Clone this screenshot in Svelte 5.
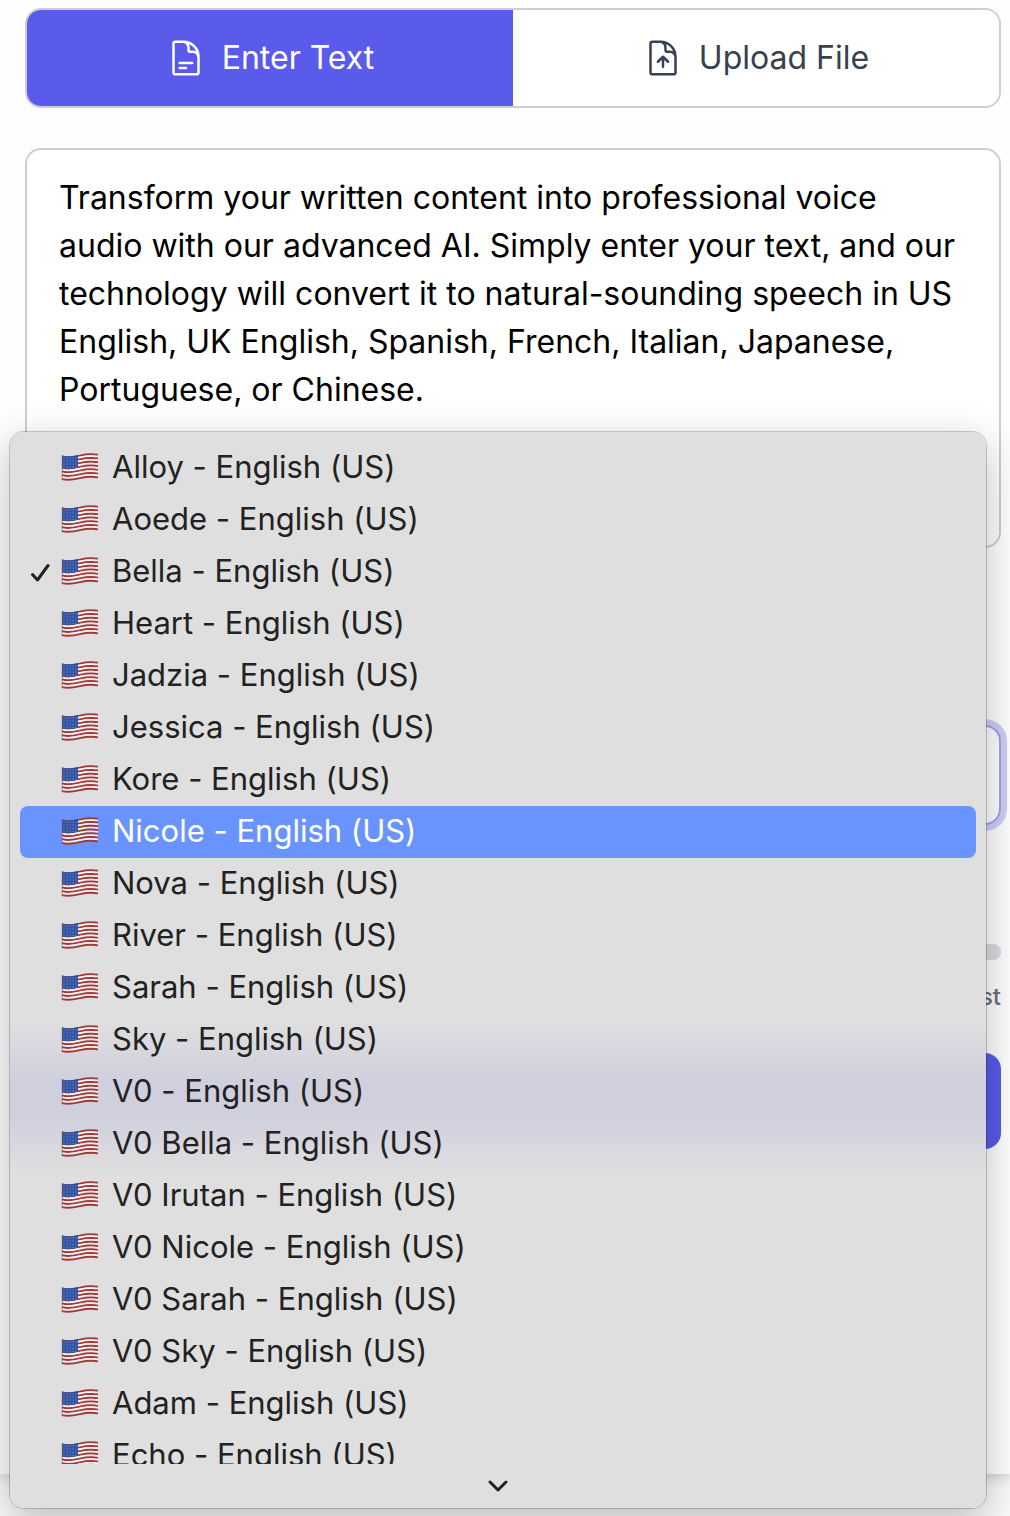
<script lang="ts">
	type Voice = { id: string; name: string };

	const voices: Voice[] = [
		'Alloy',
		'Aoede',
		'Bella',
		'Heart',
		'Jadzia',
		'Jessica',
		'Kore',
		'Nicole',
		'Nova',
		'River',
		'Sarah',
		'Sky',
		'V0',
		'V0 Bella',
		'V0 Irutan',
		'V0 Nicole',
		'V0 Sarah',
		'V0 Sky',
		'Adam',
		'Echo'
	].map((name) => ({ id: name.toLowerCase().replace(' ', '-'), name }));

	const stripes = Array.from({ length: 13 }, (_, i) => i);
	const stars = Array.from({ length: 20 }, (_, i) => ({
		x: 3 + (i % 5) * 3,
		y: 5 + Math.floor(i / 5) * 3
	}));

	let mode = $state<'text' | 'file'>('text');
	let selected = $state('bella');
	let active = $state('nicole');
	let speed = $state(1);
	let text = $state(
		'Transform your written content into professional voice audio with our advanced AI. Simply enter your text, and our technology will convert it to natural-sounding speech in US English, UK English, Spanish, French, Italian, Japanese, Portuguese, or Chinese.'
	);
</script>

{#snippet flag()}
	<svg class="flag" viewBox="0 0 38 28" aria-hidden="true">
		{#each stripes as i (i)}
			<path
				d="M1 3.500C7 5.300 13 4 19 2.600S31 0.800 37 1.800"
				transform="translate(0 {i * 1.88})"
				fill="none"
				stroke={i % 2 ? '#f3eeee' : '#a03a38'}
				stroke-width="1.95"
			/>
		{/each}
		<path d="M1 2.500C6 4 11 3.600 17 2.100V14.500C11 16.300 6 16.800 1 15Z" fill="#31539f" />
		{#each stars as star, i (i)}
			<circle cx={star.x} cy={star.y} r="0.6" fill="#93a9d8" />
		{/each}
		<path d="M1.200 2.500V27" stroke="#6b4f5f" stroke-width="0.5" />
	</svg>
{/snippet}

<main class="page">
	<form class="card" onsubmit={(e) => e.preventDefault()}>
		<div class="tabs">
			<button
				type="button"
				class="tab"
				class:tab--active={mode === 'text'}
				aria-pressed={mode === 'text'}
				onclick={() => (mode = 'text')}
			>
				<svg class="tab__icon" viewBox="0 0 24 24" aria-hidden="true">
					<path
						d="M19.5 14.25v-2.625a3.375 3.375 0 0 0-3.375-3.375h-1.5A1.125 1.125 0 0 1 13.5 7.125v-1.5a3.375 3.375 0 0 0-3.375-3.375H8.25m0 12.75h7.5m-7.5 3H12M10.5 2.25H5.625c-.621 0-1.125.504-1.125 1.125v17.25c0 .621.504 1.125 1.125 1.125h12.750c.621 0 1.125-.504 1.125-1.125V11.25a9 9 0 0 0-9-9Z"
					/>
				</svg>
				Enter Text
			</button>
			<button
				type="button"
				class="tab"
				class:tab--active={mode === 'file'}
				aria-pressed={mode === 'file'}
				onclick={() => (mode = 'file')}
			>
				<svg class="tab__icon" viewBox="0 0 24 24" aria-hidden="true">
					<path
						d="M19.5 14.25v-2.625a3.375 3.375 0 0 0-3.375-3.375h-1.5A1.125 1.125 0 0 1 13.5 7.125v-1.5a3.375 3.375 0 0 0-3.375-3.375H8.25m6.75 12-3-3m0 0-3 3m3-3v6m-1.5-15H5.625c-.621 0-1.125.504-1.125 1.125v17.25c0 .621.504 1.125 1.125 1.125h12.750c.621 0 1.125-.504 1.125-1.125V11.25a9 9 0 0 0-9-9Z"
					/>
				</svg>
				Upload File
			</button>
		</div>

		<textarea class="text" aria-label="Text" spellcheck="false" bind:value={text}></textarea>

		<div class="voice">
			<label class="label" for="voice">Voice</label>
			<div class="voice__control">
				<select id="voice" class="select" bind:value={selected}>
					{#each voices as voice (voice.id)}
						<option value={voice.id}>{voice.name} - English (US)</option>
					{/each}
				</select>

				<div class="menu">
					<ul class="menu__list" role="listbox" aria-label="Voice">
						{#each voices as voice (voice.id)}
							<li role="option" aria-selected={voice.id === selected}>
								<button
									type="button"
									class="item"
									class:item--active={voice.id === active}
									onmouseenter={() => (active = voice.id)}
									onclick={() => (selected = voice.id)}
								>
									<svg class="item__check" viewBox="0 0 20 20" aria-hidden="true">
										{#if voice.id === selected}
											<path d="M2.500 12.500 7.500 18 18 3.500" />
										{/if}
									</svg>
									{@render flag()}
									<span class="item__name">{voice.name} - English (US)</span>
								</button>
							</li>
						{/each}
					</ul>
					<div class="menu__more">
						<svg class="menu__chevron" viewBox="0 0 20 12" aria-hidden="true">
							<path d="M2 2 10 10 18 2" />
						</svg>
					</div>
				</div>
			</div>
		</div>

		<div class="speed">
			<label class="label" for="speed">Speed</label>
			<input id="speed" class="range" type="range" min="0.5" max="1.5" step="0.1" bind:value={speed} />
			<div class="scale"><span>Slow</span><span>Fast</span></div>
		</div>

		<button type="submit" class="submit">Generate</button>
	</form>
</main>

<style>
	:global(body) {
		background: #f9fafb;
		overflow: hidden;
	}
	.page {
		min-height: 100vh;
		box-sizing: border-box;
		overflow: hidden;
		font-family: Inter, 'Liberation Sans', sans-serif;
		font-size: 32px;
		line-height: 48px;
	}
	.page * {
		box-sizing: border-box;
	}
	.card {
		display: flex;
		flex-direction: column;
		padding: 8px 9px 325px 25px;
		background: #fefefe;
		box-shadow: 0 4px 12px rgba(0, 0, 0, 0.16);
	}
	button,
	select,
	textarea {
		font: inherit;
	}
	button {
		border: 0;
		cursor: pointer;
	}

	.tabs {
		display: flex;
		border: 2px solid #cccdd6;
		border-radius: 16px;
		overflow: hidden;
	}
	.tab {
		flex: 1;
		display: flex;
		align-items: center;
		justify-content: center;
		gap: 16px;
		padding: 24px;
		background: #fff;
		color: #374151;
	}
	.tab--active {
		background: #5a5aeb;
		color: #fff;
	}
	.tab__icon {
		width: 40px;
		height: 40px;
		fill: none;
		stroke: currentColor;
		stroke-width: 1.5;
		stroke-linecap: round;
		stroke-linejoin: round;
	}

	.text {
		display: block;
		width: 100%;
		height: 400px;
		margin-top: 40px;
		padding: 24px 32px;
		border: 2px solid #cccdd3;
		border-radius: 16px;
		background: #fff;
		color: #000;
		resize: none;
		outline: none;
	}
	.label {
		display: block;
		margin-bottom: 16px;
		font-size: 28px;
		line-height: 40px;
		color: #374151;
	}

	.voice {
		margin-top: 121px;
	}
	.voice__control {
		position: relative;
	}
	.select {
		display: block;
		width: 100%;
		height: 100px;
		padding: 0 32px;
		appearance: none;
		border: 2px solid #a3a1ea;
		border-radius: 16px;
		background: #fff;
		box-shadow: 0 0 0 6px #cecdf6;
		outline: none;
	}

	/* Das Menü liegt wie ein natives Popup über dem Formular. */
	.menu {
		position: absolute;
		z-index: 1;
		top: -293px;
		left: -15px;
		right: 15px;
		padding: 10px 10px 0;
		border-radius: 14px;
		background: linear-gradient(
			#dfdfdf 590px,
			#d0cfde 650px,
			#d0cfde 685px,
			#dfdfdf 740px
		);
		box-shadow:
			0 0 0 1px rgba(0, 0, 0, 0.2),
			0 12px 40px rgba(0, 0, 0, 0.26);
	}
	.menu__list {
		height: 1022px;
		margin: 0;
		padding: 0;
		overflow: hidden;
		list-style: none;
	}
	.item {
		display: flex;
		align-items: center;
		width: 100%;
		height: 52px;
		padding: 0 10px 2px;
		border-radius: 8px;
		background: none;
		color: #222;
		font-size: 31px;
		/* Bindestrich und Klammern in Grundhöhe, ohne kontextuelle Varianten. */
		font-feature-settings: 'calt' 0;
		text-align: left;
	}
	.item--active {
		background: #6a94fd;
		color: #fff;
	}
	.item__check {
		width: 20px;
		height: 20px;
		margin-top: 2px;
		margin-right: 11px;
		fill: none;
		stroke: #222;
		stroke-width: 3;
		stroke-linecap: round;
		stroke-linejoin: round;
	}
	.flag {
		width: 38px;
		height: 28px;
		margin-right: 13px;
	}
	.menu__more {
		display: flex;
		align-items: center;
		justify-content: center;
		height: 44px;
	}
	.menu__chevron {
		width: 20px;
		height: 12px;
		fill: none;
		stroke: #222;
		stroke-width: 3;
		stroke-linecap: round;
		stroke-linejoin: round;
	}

	.speed {
		margin-top: 63px;
	}
	.range {
		display: block;
		width: 100%;
		height: 16px;
		margin: 0;
		appearance: none;
		border-radius: 8px;
		background: #d9dbe2;
	}
	.scale {
		display: flex;
		justify-content: space-between;
		margin-top: 21px;
		font-size: 24px;
		font-weight: 500;
		line-height: 32px;
		color: #6b7280;
	}
	.submit {
		height: 96px;
		margin-top: 40px;
		border-radius: 16px;
		background: #5a5aeb;
		color: #fff;
	}
</style>
